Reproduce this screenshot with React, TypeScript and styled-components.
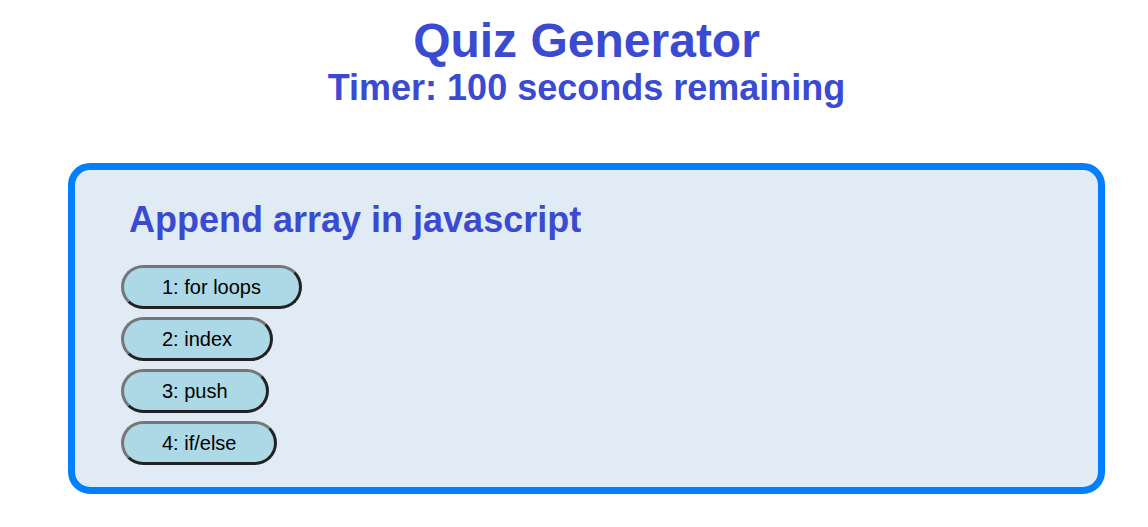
import React from "react";
import styled, { createGlobalStyle } from "styled-components";

const Global = createGlobalStyle`
  html, body { margin: 0; padding: 0; background: #fff; }
  body { font-family: "Liberation Sans", Arial, sans-serif; }
`;

const Page = styled.div`
  display: flex;
  flex-direction: column;
  align-items: center;
  padding: 14px 43px 0 68px;
`;

const Title = styled.h1`
  margin: 0;
  font-size: 48px;
  line-height: 54px;
  font-weight: 700;
  color: #3a4bd1;
`;

const Timer = styled.h2`
  margin: 0;
  font-size: 36px;
  line-height: 40px;
  font-weight: 700;
  color: #3a4bd1;
`;

const Card = styled.section`
  align-self: stretch;
  margin-top: 55px;
  border: 7px solid #0080ff;
  border-radius: 22px;
  background: #e1ebf5;
  padding: 30px 0 22px 46px;
  display: flex;
  flex-direction: column;
  align-items: flex-start;
`;

const Question = styled.h3`
  margin: 0 0 25px 8px;
  font-size: 36px;
  line-height: 40px;
  font-weight: 700;
  color: #3a4bd1;
`;

const Choices = styled.div`
  display: flex;
  flex-direction: column;
  align-items: flex-start;
  gap: 8px;
`;

const Choice = styled.button`
  height: 44px;
  padding: 0 38px;
  border: 3px solid;
  border-color: #767676 #222 #222 #767676;
  border-radius: 22px;
  background: #add8e6;
  font-family: "Liberation Sans", Arial, sans-serif;
  font-size: 20px;
  color: #000;
  cursor: pointer;
`;

const choices = ["1: for loops", "2: index", "3: push", "4: if/else"];

export default function App() {
  return (
    <>
      <Global />
      <Page>
        <Title>Quiz Generator</Title>
        <Timer>Timer: 100 seconds remaining</Timer>
        <Card>
          <Question>Append array in javascript</Question>
          <Choices>
            {choices.map((c) => (
              <Choice key={c}>{c}</Choice>
            ))}
          </Choices>
        </Card>
      </Page>
    </>
  );
}
